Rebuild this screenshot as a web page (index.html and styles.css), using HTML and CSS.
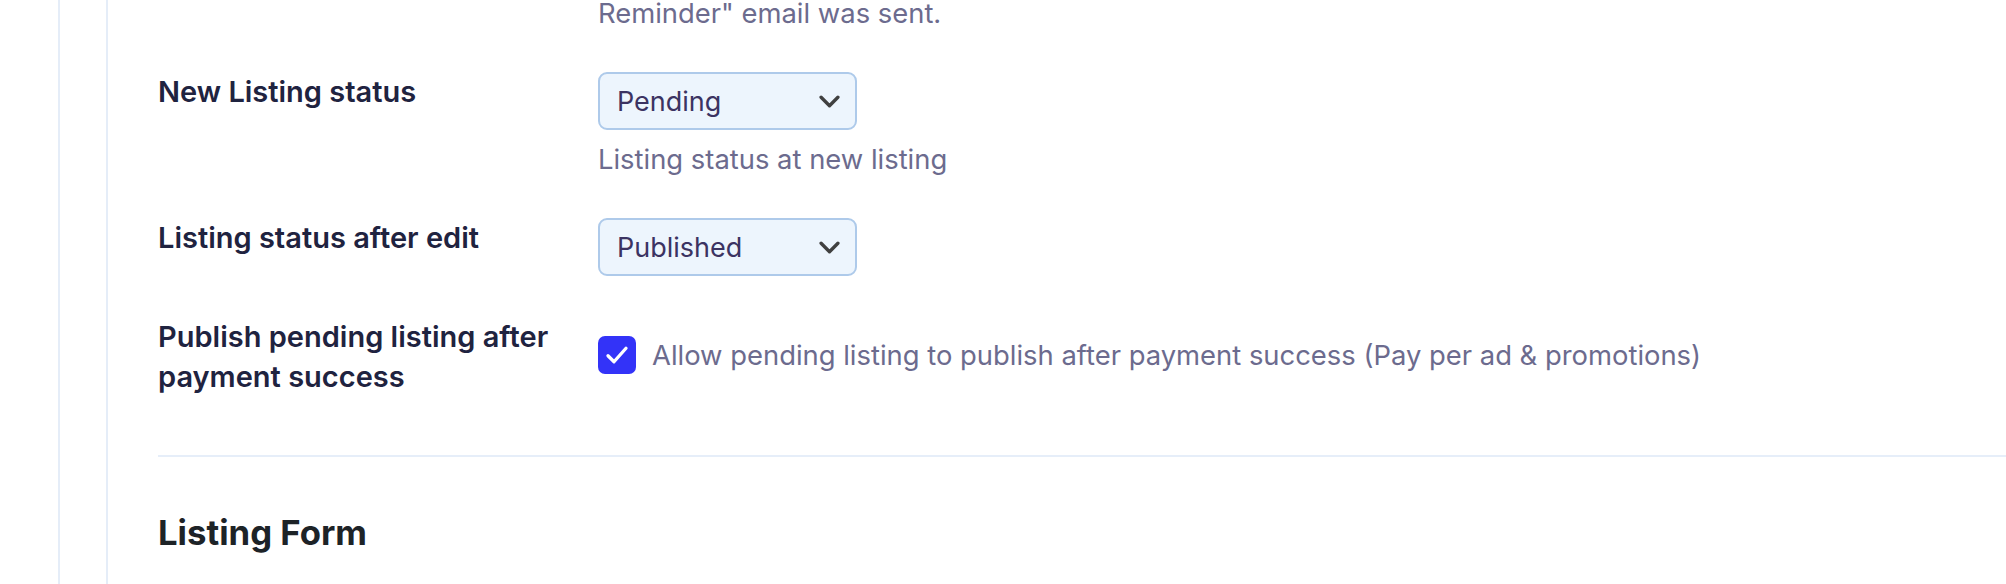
FILE: index.html
```html
<!DOCTYPE html>
<html lang="en">

<head>
    <meta charset="UTF-8">
    <meta name="viewport" content="width=device-width, initial-scale=1.0">
    <title>Listing settings</title>
    <link rel="stylesheet" href="styles.css">
</head>

<body>

    <div class="layout">
        <aside class="rail"></aside>
        <div class="gutter"></div>

        <main class="content">
            <div class="settings">

                <!-- tail of the previous field, scrolled half out of view -->
                <div class="field field--tail">
                    <div class="field__label"></div>
                    <div class="field__control">
                        <p class="hint">Reminder" email was sent.</p>
                    </div>
                </div>

                <div class="field">
                    <label class="field__label" for="new_status">New Listing status</label>
                    <div class="field__control">
                        <div class="select">
                            <select id="new_status">
                                <option>Pending</option>
                                <option>Published</option>
                            </select>
                            <svg class="select__chevron" viewBox="0 0 20 12" aria-hidden="true">
                                <path d="M2 2l8 8 8-8" />
                            </svg>
                        </div>
                        <p class="hint hint--below">Listing status at new listing</p>
                    </div>
                </div>

                <div class="field">
                    <label class="field__label" for="edit_status">Listing status after edit</label>
                    <div class="field__control">
                        <div class="select">
                            <select id="edit_status">
                                <option>Published</option>
                                <option>Pending</option>
                            </select>
                            <svg class="select__chevron" viewBox="0 0 20 12" aria-hidden="true">
                                <path d="M2 2l8 8 8-8" />
                            </svg>
                        </div>
                    </div>
                </div>

                <div class="field field--check">
                    <div class="field__label">Publish pending listing after payment success</div>
                    <div class="field__control">
                        <label class="check">
                            <span class="check__box">
                                <svg viewBox="0 0 20 20" aria-hidden="true">
                                    <path d="M4 10.5l4 4 8-9" />
                                </svg>
                            </span>
                            <span class="hint">Allow pending listing to publish after payment success (Pay per ad &amp; promotions)</span>
                        </label>
                    </div>
                </div>

            </div>

            <hr class="divider">

            <h2 class="section-title">Listing Form</h2>
        </main>
    </div>

</body>

</html>
```

FILE: styles.css
```css
/* Reset */
html {
    box-sizing: border-box;
}

*,
*:before,
*:after {
    box-sizing: inherit;
}

body,
h1,
h2,
p {
    margin: 0;
    padding: 0;
    font-weight: normal;
}

body {
    font-family: Inter, "Noto Sans", sans-serif;
    background: #fff;
    color: #1f2340;
    overflow: hidden;
}

/* Page frame */
.layout {
    display: flex;
    min-height: 100vh;
}

.rail {
    width: 60px;
    flex-shrink: 0;
    border-right: 2px solid #e5edf8;
}

.gutter {
    width: 48px;
    flex-shrink: 0;
    border-right: 2px solid #e5edf8;
}

.content {
    flex: 1;
    padding-left: 50px;
}

/* Settings rows */
.settings {
    display: flex;
    flex-direction: column;
    gap: 40px;
}

.field {
    display: grid;
    grid-template-columns: 440px 1fr;
}

.field--tail {
    margin-bottom: 6px;
}

.field--tail .hint {
    line-height: 26px;
}

.field--check {
    margin-top: 1px;
}

.field__label {
    font-size: 29px;
    line-height: 40px;
    font-weight: 600;
    color: #1f2340;
    padding-right: 10px;
}

.hint {
    font-size: 27.4px;
    line-height: 38px;
    color: #6c6b8e;
}

.hint--below {
    margin-top: 10px;
}

/* Select */
.select {
    position: relative;
    width: 259px;
}

.select select {
    appearance: none;
    -webkit-appearance: none;
    width: 100%;
    height: 58px;
    padding: 0 50px 0 17px;
    font-family: inherit;
    font-size: 27px;
    color: #3b3362;
    background: #edf5fd;
    border: 2px solid #aecaea;
    border-radius: 9px;
    outline: none;
}

.select__chevron {
    position: absolute;
    right: 17px;
    top: 23px;
    width: 21px;
    height: 13px;
    fill: none;
    stroke: #404040;
    stroke-width: 3.2;
    stroke-linecap: round;
    stroke-linejoin: round;
    pointer-events: none;
}

/* Checkbox */
.check {
    display: flex;
    align-items: center;
    gap: 16px;
    padding-top: 19px;
}

.check__box {
    width: 38px;
    height: 38px;
    flex-shrink: 0;
    display: flex;
    align-items: center;
    justify-content: center;
    background: #3333f8;
    border-radius: 7px;
}

.check__box svg {
    width: 30px;
    height: 30px;
    fill: none;
    stroke: #fff;
    stroke-width: 2.2;
    stroke-linecap: round;
    stroke-linejoin: round;
}

/* Section */
.divider {
    margin: 58px 0 0;
    border: 0;
    border-top: 2px solid #e6eef9;
}

.section-title {
    margin-top: 55px;
    font-size: 34.7px;
    line-height: 1.2;
    font-weight: 700;
    color: #1d2327;
}
```
